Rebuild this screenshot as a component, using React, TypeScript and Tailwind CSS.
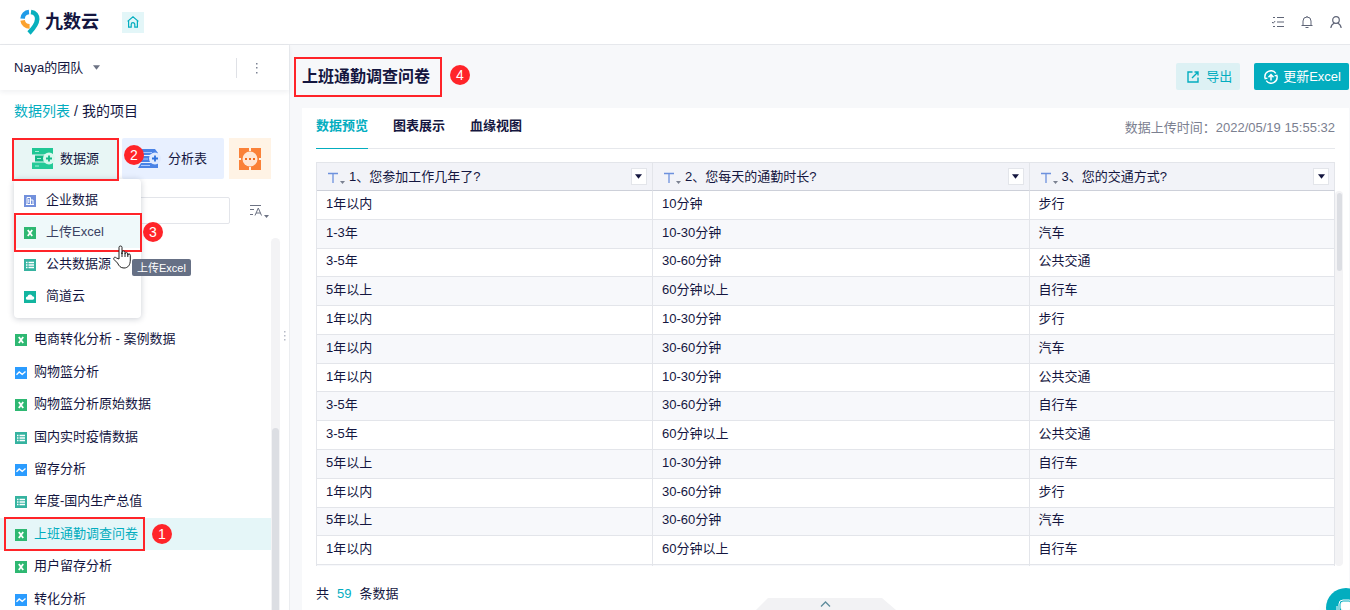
import type { ReactNode } from 'react';
import clsx from 'clsx';

type FileKind = 'excel' | 'chart' | 'table' | 'company' | 'cloud';

const files: { name: string; kind: FileKind; active?: boolean }[] = [
  { name: '电商转化分析 - 案例数据', kind: 'excel' },
  { name: '购物篮分析', kind: 'chart' },
  { name: '购物篮分析原始数据', kind: 'excel' },
  { name: '国内实时疫情数据', kind: 'table' },
  { name: '留存分析', kind: 'chart' },
  { name: '年度-国内生产总值', kind: 'table' },
  { name: '上班通勤调查问卷', kind: 'excel', active: true },
  { name: '用户留存分析', kind: 'excel' },
  { name: '转化分析', kind: 'chart' },
];

const menuItems: { name: string; kind: FileKind }[] = [
  { name: '企业数据', kind: 'company' },
  { name: '上传Excel', kind: 'excel' },
  { name: '公共数据源', kind: 'table' },
  { name: '简道云', kind: 'cloud' },
];

const columns = ['1、您参加工作几年了?', '2、您每天的通勤时长?', '3、您的交通方式?'];

const rows = [
  ['1年以内', '10分钟', '步行'],
  ['1-3年', '10-30分钟', '汽车'],
  ['3-5年', '30-60分钟', '公共交通'],
  ['5年以上', '60分钟以上', '自行车'],
  ['1年以内', '10-30分钟', '步行'],
  ['1年以内', '30-60分钟', '汽车'],
  ['1年以内', '10-30分钟', '公共交通'],
  ['3-5年', '30-60分钟', '自行车'],
  ['3-5年', '60分钟以上', '公共交通'],
  ['5年以上', '10-30分钟', '自行车'],
  ['1年以内', '30-60分钟', '步行'],
  ['5年以上', '30-60分钟', '汽车'],
  ['1年以内', '60分钟以上', '自行车'],
  ['', '', ''],
];

const FileIcon = ({ kind }: { kind: FileKind }) => (
  <svg viewBox="0 0 12 12" className="mt-0.5 size-3 shrink-0" fill="none">
    {kind === 'excel' && (
      <>
        <rect width="12" height="12" fill="#2eb872" />
        <path d="M3.8 3l4.4 6M8.2 3L3.8 9" stroke="#fff" strokeWidth="1.8" />
      </>
    )}
    {kind === 'chart' && (
      <>
        <rect width="12" height="12" fill="#2b9cff" />
        <path d="M1.5 7.8L4.2 5l3 2.4L10.5 4.4" stroke="#fff" strokeWidth="1.4" />
      </>
    )}
    {kind === 'table' && (
      <>
        <rect width="12" height="12" fill="#36b3a0" />
        <path
          d="M2 3.5h1.5M4.5 3.5H10M2 6h1.5M4.5 6H10M2 8.5h1.5M4.5 8.5H10"
          stroke="#fff"
          strokeWidth="1.3"
        />
      </>
    )}
    {kind === 'company' && (
      <>
        <rect width="12" height="12" fill="#7290dc" />
        <path d="M3 9.5V2.5h3.5v7M6.5 5H9v4.5M2 9.5h8M4.8 4v4" stroke="#fff" />
      </>
    )}
    {kind === 'cloud' && (
      <>
        <rect width="12" height="12" fill="#13b5a0" />
        <path
          d="M3.6 8.8a1.7 1.7 0 0 1-.1-3.4 2.6 2.6 0 0 1 5-.2 1.8 1.8 0 0 1 0 3.6z"
          fill="#fff"
        />
      </>
    )}
  </svg>
);

const Caret = ({ className }: { className?: string }) => (
  <svg viewBox="0 0 8 5" className={clsx('shrink-0', className)}>
    <path d="M0 0h8L4 5z" fill="currentColor" />
  </svg>
);

const Step = ({ className, children }: { className: string; children: ReactNode }) => (
  <span
    className={clsx(
      'absolute z-30 flex size-5 items-center justify-center rounded-full bg-[#ff2429] text-sm leading-none text-white',
      className,
    )}
  >
    {children}
  </span>
);

const Frame = ({ className }: { className: string }) => (
  <span
    className={clsx(
      'pointer-events-none absolute z-20 border-2 border-[#ff2429]',
      className,
    )}
  />
);

const Header = () => (
  <header className="flex h-[45px] shrink-0 items-center border-b border-[#e6e8ec] bg-white pr-[7px] pl-5">
    <a href="#" className="flex items-center gap-[5px] text-lg font-bold text-[#14163f]">
      <svg viewBox="0 0 20 26" className="h-[26px] w-5" fill="none">
        <path d="M2.6 9.6A7 7 0 0 1 9 3" stroke="#1f9be8" strokeWidth="4.6" />
        <path d="M2.6 11.4A7 7 0 0 0 9.6 17.4" stroke="#fba22f" strokeWidth="4.6" />
        <path
          d="M11 3c4.2.5 6.400 3.400 6.200 7.200C17 15 13.500 19.500 9 24"
          stroke="#07b0bd"
          strokeWidth="4.600"
        />
      </svg>
      九数云
    </a>
    <button
      aria-label="首页"
      className="ml-[23px] flex h-[21px] w-[22px] items-center justify-center bg-[#e3f6f8] text-[#03adbf]"
    >
      <svg viewBox="0 0 12 12" className="size-3" fill="none" stroke="currentColor">
        <path
          d="M.6 5.4L6 .9l5.4 4.5M1.6 4.8v6.4h2.6V8.5a1.8 1.8 0 0 1 3.6 0v2.7h2.6V4.8"
          strokeWidth="1.2"
        />
      </svg>
    </button>
    <div className="ml-auto flex items-center gap-[15px] text-[#5f6577]">
      <button aria-label="任务">
        <svg viewBox="0 0 14 14" className="size-[14px]" fill="none" stroke="currentColor">
          <path d="M6 2.5h7M6 7h7M6 11.5h7" strokeWidth="1.2" />
          <path d="M2 2.5h2M1 7l1.2 1.2L4.2 6M2 11.5h2" />
        </svg>
      </button>
      <button aria-label="通知">
        <svg viewBox="0 0 14 14" className="size-[14px]" fill="none" stroke="currentColor">
          <path d="M3 10.5V6a4 4 0 0 1 8 0v4.5M1.5 10.5h11M5.5 12.5h3M7 1v1" />
        </svg>
      </button>
      <button aria-label="用户">
        <svg viewBox="0 0 14 14" className="size-[14px]" fill="none" stroke="currentColor">
          <circle cx="7" cy="5" r="3.3" strokeWidth="1.2" />
          <path
            d="M1.8 13c.4-2.5 1.8-4.2 3.6-5M12.2 13c-.4-2.5-1.8-4.2-3.6-5"
            strokeWidth="1.2"
          />
        </svg>
      </button>
    </div>
  </header>
);

const SourceIcon = () => (
  <svg viewBox="0 0 24 22" className="h-[22px] w-6" fill="none">
    <rect width="21" height="6.5" y="0" fill="#20c795" />
    <rect width="17" height="6" x="3" y="7.5" fill="#12b886" />
    <rect width="21" height="6.5" y="14.5" fill="#25ca98" />
    <path d="M3 3.5h4M5 10.5h4M3 18h4" stroke="#a5efd8" />
    <circle cx="17" cy="10.5" r="6" fill="#d9f8ee" />
    <path d="M17 7.5v6M14 10.5h6" stroke="#12b886" strokeWidth="1.8" />
  </svg>
);

const AnalysisIcon = () => (
  <svg viewBox="0 0 24 22" className="h-[22px] w-6" fill="none">
    <path d="M0 1h17l3 4v2H3zM3 8h14v6H3zM3 15h17v5H0z" fill="#4a83e6" />
    <path d="M5 4.5h9M5 11h5M3 17.5h9" stroke="#abc9ff" />
    <circle cx="17" cy="10.5" r="6" fill="#dfeaff" />
    <path d="M17 7.5v6M14 10.5h6" stroke="#2d71dd" strokeWidth="1.8" />
  </svg>
);

const MoreIcon = () => (
  <svg viewBox="0 0 22 22" className="size-[22px]">
    <path d="M0 0h10v3h2V0h10v10h-2v2h2v10H12v-3h-2v3H0V12h2v-2H0z" fill="#fa8138" />
    <circle cx="11" cy="11" r="7.5" fill="#ffe7d5" />
    <path d="M6 10h2v2H6zM10 10h2v2h-2zM14 10h2v2h-2z" fill="#f26a1b" />
  </svg>
);

const SourceMenu = () => (
  <div className="absolute top-full left-0 z-10 w-[127px] rounded-sm bg-white pt-[5px] pb-1.5 shadow-[0_1px_6px_rgba(20,30,60,0.22)]">
    <ul>
      {menuItems.map((item, i) => (
        <li key={item.name}>
          <button
            className={clsx(
              'flex h-8 w-full items-center gap-2.5 pl-2.5',
              i === 1 && 'bg-[#eff9fa] text-[#3b4263]',
            )}
          >
            <FileIcon kind={item.kind} />
            {item.name}
          </button>
        </li>
      ))}
    </ul>
    <Frame className="top-[34px] right-[-1px] left-0 h-[39px]" />
    <Step className="top-[43px] left-[129px]">3</Step>
    <span
      role="tooltip"
      className="absolute top-20 left-[118px] flex h-[17px] items-center rounded-xs bg-[#667085] px-[5px] text-[11px] whitespace-nowrap text-white"
    >
      上传Excel
    </span>
    <svg viewBox="0 0 18 24" className="absolute top-[66px] left-[99px] z-30 h-6 w-[18px]">
      <path
        d="M6 14V2.5a1.5 1.5 0 0 1 3 0V9V7.5a1.5 1.5 0 0 1 3 0V9a1.4 1.4 0 0 1 2.8 0v1.2a1.2 1.2 0 0 1 2.5 0V15c0 5-2.3 8-6.3 8-3.5 0-5-2-6.5-5L1 14.5c-1-2 1-3 2.5-1.5z"
        fill="#fff"
        stroke="#222"
      />
      <path d="M9 8v4M12 9v3M14.8 9.5V12" stroke="#222" />
    </svg>
  </div>
);

const Sidebar = () => (
  <aside className="relative flex w-[290px] shrink-0 flex-col border-r border-[#ebedf0] bg-white">
    <div className="flex h-[45px] shrink-0 items-center pr-[31px] pl-3.5 shadow-[0_2px_5px_rgba(30,40,70,0.07)]">
      <button className="flex items-center gap-2.5">
        Naya的团队
        <Caret className="h-[5px] w-[7px] text-[#6c7283]" />
      </button>
      <span className="ml-auto h-5 w-px bg-[#dfe1e6]" />
      <button aria-label="更多" className="ml-[18px]">
        <svg viewBox="0 0 3 12" className="h-3 w-[3px]" fill="#7d8394">
          <path d="M1 1h1.5v1.5H1zM1 5h1.5v1.5H1zM1 10h1.5v1.5H1z" />
        </svg>
      </button>
    </div>

    <nav className="flex h-12 shrink-0 items-center gap-1 pb-1.5 pl-3.5 text-sm">
      <a href="#" className="text-[#03adbf]">
        数据列表
      </a>
      <span>/</span>
      <span>我的项目</span>
    </nav>

    <div className="flex h-[41px] shrink-0 gap-[5px] pr-[18px] pl-3.5">
      <div className="relative w-[103px]">
        <button className="flex size-full items-center gap-1 bg-[#e8f6f5] pl-[18px]">
          <SourceIcon />
          数据源
        </button>
        <Frame className="-inset-x-0.5 top-0 -bottom-0.5" />
        <SourceMenu />
      </div>
      <div className="relative flex-1">
        <button className="flex size-full items-center gap-1.5 rounded-xs bg-[#e8f0ff] pl-4">
          <AnalysisIcon />
          分析表
        </button>
        <Step className="top-[7px] left-0.5">2</Step>
      </div>
      <button
        aria-label="更多操作"
        className="flex w-[42px] items-center justify-center bg-[#fff3e5]"
      >
        <MoreIcon />
      </button>
    </div>

    <div className="flex h-[59px] shrink-0 items-center gap-5 pt-1 pr-5 pl-3.5 text-[#6c7283]">
      <input
        type="search"
        aria-label="搜索"
        className="h-[27px] min-w-0 flex-1 rounded-xs border border-[#e3e5ea] outline-none"
      />
      <button aria-label="排序">
        <svg viewBox="0 0 19 16" className="h-4 w-[19px]" fill="none" stroke="currentColor">
          <path d="M0 2.5h11M0 6.5h4M0 11.5h3M5 12.5L8.3 5l3.2 7.5M6 10h4.5" />
          <path d="M14 12h5l-2.5 3z" fill="currentColor" stroke="none" />
        </svg>
      </button>
    </div>

    <div className="flex min-h-0 flex-1 overflow-hidden">
      <ul className="grid h-[377px] flex-1 auto-rows-fr pt-[85px]">
        {files.map((file) => (
          <li key={file.name} className="relative">
            <a
              href="#"
              className={clsx(
                'flex h-full items-center gap-[7px] pl-[15px]',
                file.active && 'bg-[#e5f6f8] text-[#03adbf]',
              )}
            >
              <FileIcon kind={file.kind} />
              {file.name}
            </a>
            {file.active && (
              <>
                <Frame className="-inset-y-px left-1 w-[141px]" />
                <Step className="top-1.5 left-[152px]">1</Step>
              </>
            )}
          </li>
        ))}
      </ul>
      <div className="mr-[9px] w-[9px] rounded-t-full bg-[#f3f3f5] px-px pt-[190px]">
        <div className="h-full rounded-t-full bg-[#dcdee3]" />
      </div>
    </div>
    <svg
      viewBox="0 0 2 12"
      className="absolute top-[285px] right-[3px] h-3 w-0.5"
      fill="#b6bac6"
    >
      <path d="M0 1h1.5v1.5H0zM0 5h1.5v1.5H0zM0 9h1.5v1.5H0z" />
    </svg>
  </aside>
);

// The last row is cut off by the scroll area.
const DataTable = () => (
  <div className="mt-[13px] flex h-[404px] shrink-0 overflow-hidden">
    <div className="flex-1">
      <table className="h-[432px] w-full table-fixed border-separate border-spacing-0 border-l border-[#e3e5ea] text-left">
        <colgroup>
          <col className="w-[33%]" />
          <col className="w-[37%]" />
          <col className="w-[30%]" />
        </colgroup>
        <thead>
          <tr className="h-[29px] bg-[#f2f3f8]">
            {columns.map((name) => (
              <th
                key={name}
                className="border-y border-r border-[#e3e5ea] border-b-[#cdd0d9] p-0 pr-[5px] pl-2.5 font-normal"
              >
                <div className="flex items-center">
                  <svg viewBox="0 0 18 14" className="mr-1 h-3.5 w-[18px]" fill="none">
                    <path d="M1 3.5h10M6 3.5V13" stroke="#6d91dd" strokeWidth="1.3" />
                    <path d="M13 11h5l-2.5 3z" fill="#7b8191" />
                  </svg>
                  {name}
                  <button
                    aria-label="筛选"
                    className="ml-auto flex h-[17px] w-4 items-center justify-center border border-[#e3e5ea] bg-white"
                  >
                    <Caret className="h-[5px] w-[7px]" />
                  </button>
                </div>
              </th>
            ))}
          </tr>
        </thead>
        <tbody>
          {rows.map((row, i) => (
            <tr key={i} className="even:bg-[#f7f8fb]">
              {row.map((cell, j) => (
                <td
                  key={j}
                  className="border-r border-b border-[#e3e5ea] p-0 pb-0.5 pl-[9px]"
                >
                  <div className="h-5">{cell}</div>
                </td>
              ))}
            </tr>
          ))}
        </tbody>
      </table>
    </div>
    <div className="mt-[29px] w-2 rounded-full bg-[#f3f3f5] px-px pt-0.5">
      <div className="ml-px h-[78px] rounded-full bg-[#dcdee3]" />
    </div>
  </div>
);

const Main = () => (
  <main className="flex min-w-0 flex-1 flex-col bg-[#f7f8fa] pr-px pl-3">
    <div className="flex h-[63px] shrink-0 items-center">
      <div className="relative">
        <h1 className="text-base font-semibold">上班通勤调查问卷</h1>
        <Frame className="-inset-y-2 -right-3 -left-2" />
        <Step className="top-0 -right-10">4</Step>
      </div>
      <div className="ml-auto flex gap-3.5">
        <button className="flex h-[27px] items-center gap-[7px] rounded-xs bg-[#ddf1f4] pr-2 pl-[11px] text-[#03adbf]">
          <svg viewBox="0 0 12 12" className="size-3" fill="none" stroke="currentColor">
            <path d="M5.5 1H1v10h10V6.5M7.5 1H11v3.5M11 1L5 7" strokeWidth="1.4" />
          </svg>
          导出
        </button>
        <button className="flex h-[27px] items-center gap-[5px] rounded-xs bg-[#03adbf] pr-2 pl-2.5 text-white">
          <svg viewBox="0 0 14 14" className="size-3.5" fill="none" stroke="currentColor">
            <path
              d="M1.2 8.5A6 6 0 0 1 11.8 3.3M12.8 5.5A6 6 0 0 1 2.2 10.7M.6 6.5l.6 2.2 2.2-.6M13.4 7.5l-.6-2.2-2.2.6"
              strokeWidth="1.4"
            />
            <path d="M7 10.5V5M4.5 7.2L7 4.5l2.5 2.7" strokeWidth="1.5" />
          </svg>
          更新Excel
        </button>
      </div>
    </div>

    <section className="relative flex flex-1 flex-col bg-white pl-3.5">
      <div className="mr-3.5 flex h-[41px] shrink-0 items-center justify-between border-b border-[#e6e8ec]">
        <div role="tablist" className="flex h-[41px] gap-[25px] font-semibold">
          <button
            role="tab"
            aria-selected
            className="border-b border-[#03adbf] pb-[3px] text-[#03adbf]"
          >
            数据预览
          </button>
          <button role="tab" className="pb-1">
            图表展示
          </button>
          <button role="tab" className="pb-1">
            血缘视图
          </button>
        </div>
        <p className="text-[#7b8090]">数据上传时间：2022/05/19 15:55:32</p>
      </div>
      <div className="pr-1.5">
        <DataTable />
      </div>
      <p className="mt-[18px] flex gap-2">
        <span>共</span>
        <span className="text-[#03adbf]">59</span>
        <span>条数据</span>
      </p>
      <button aria-label="展开" className="absolute bottom-0 left-1/2 -translate-x-1/2">
        <svg viewBox="0 0 140 12" className="h-3 w-[140px]" fill="none">
          <path d="M12 0h114l14 12H0z" fill="#f2f2f4" />
          <path d="M65 8.5l4.5-4.5L74 8.5" stroke="#5e8c9c" strokeWidth="1.3" />
        </svg>
      </button>
    </section>
  </main>
);

const App = () => (
  <div className="flex h-screen flex-col overflow-hidden bg-white font-['Liberation_Sans','Noto_Sans_CJK_SC',sans-serif] text-[13px] leading-5 text-[#14163f]">
    <Header />
    <div className="flex min-h-0 flex-1">
      <Sidebar />
      <Main />
    </div>
    <button
      aria-label="在线客服"
      className="fixed -right-4 -bottom-[18px] z-40 flex size-10 items-center justify-center rounded-full bg-[#03adbf] text-white shadow-lg"
    >
      <svg viewBox="0 0 20 20" className="size-5" fill="none" stroke="currentColor">
        <rect x="3" y="2" width="14" height="15" rx="4" />
        <rect x="5" y="4" width="10" height="8" rx="2" fill="currentColor" />
        <path d="M1 8v6M19 8v6M7.5 14h5" />
      </svg>
    </button>
  </div>
);

export default App;
